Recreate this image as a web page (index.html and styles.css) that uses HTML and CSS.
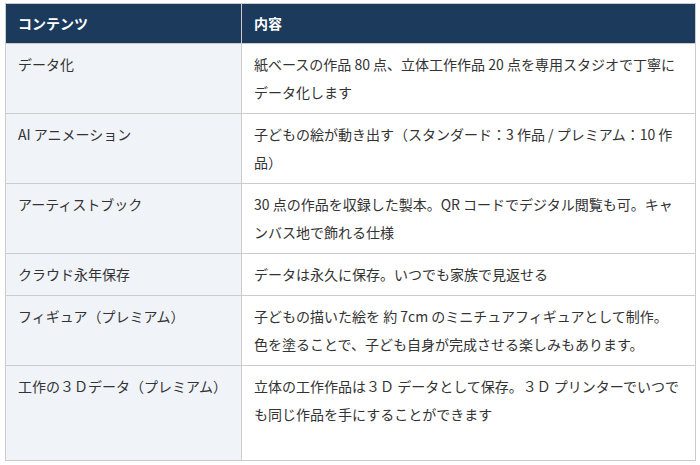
FILE: index.html
```html
<!DOCTYPE html>
<html lang="ja">
<head>
<meta charset="utf-8">
<title>コンテンツ</title>
<link rel="stylesheet" href="styles.css">
</head>
<body>
<div class="wrap">
<table class="spec">
  <colgroup><col class="c1"><col class="c2"></colgroup>
  <thead>
    <tr><th>コンテンツ</th><th>内容</th></tr>
  </thead>
  <tbody>
    <tr><td class="name">データ化</td><td>紙ベースの作品 80 点、立体工作作品 20 点を専用スタジオで丁寧にデータ化します</td></tr>
    <tr><td class="name">AI アニメーション</td><td>子どもの絵が動き出す（スタンダード：3 作品 / プレミアム：10 作品）</td></tr>
    <tr><td class="name">アーティストブック</td><td>30 点の作品を収録した製本。QR コードでデジタル閲覧も可。キャンバス地で飾れる仕様</td></tr>
    <tr><td class="name">クラウド永年保存</td><td>データは永久に保存。いつでも家族で見返せる</td></tr>
    <tr><td class="name">フィギュア（プレミアム）</td><td>子どもの描いた絵を 約 7cm のミニチュアフィギュアとして制作。<br>色を塗ることで、子ども自身が完成させる楽しみもあります。</td></tr>
    <tr class="last"><td class="name">工作の３Ｄデータ（プレミアム）</td><td>立体の工作作品は３Ｄ データとして保存。３Ｄ プリンターでいつでも同じ作品を手にすることができます</td></tr>
  </tbody>
</table>
</div>
</body>
</html>
```
FILE: styles.css
```css
html, body {
  margin: 0;
  padding: 0;
  background: #ffffff;
}
.wrap {
  padding: 3px 5px 0 5px;
}
.spec {
  width: 690px;
  border-collapse: collapse;
  table-layout: fixed;
  font-family: "Noto Sans CJK JP", "Noto Sans", sans-serif;
  font-size: 14px;
  color: #333333;
}
.c1 { width: 236px; }
.c2 { width: 454px; }
.spec th, .spec td {
  border: 1px solid #cccccc;
  text-align: left;
  vertical-align: top;
  padding: 6px 12px 7px 12px;
  line-height: 28px;
}
.spec th {
  background: #1b3a5c;
  color: #ffffff;
  font-weight: bold;
  padding: 6px 12px 6px 12px;
  line-height: 27px;
}
.spec td.name {
  background: #f0f3f8;
}
.spec tr.last td {
  height: 81px;
}
```
